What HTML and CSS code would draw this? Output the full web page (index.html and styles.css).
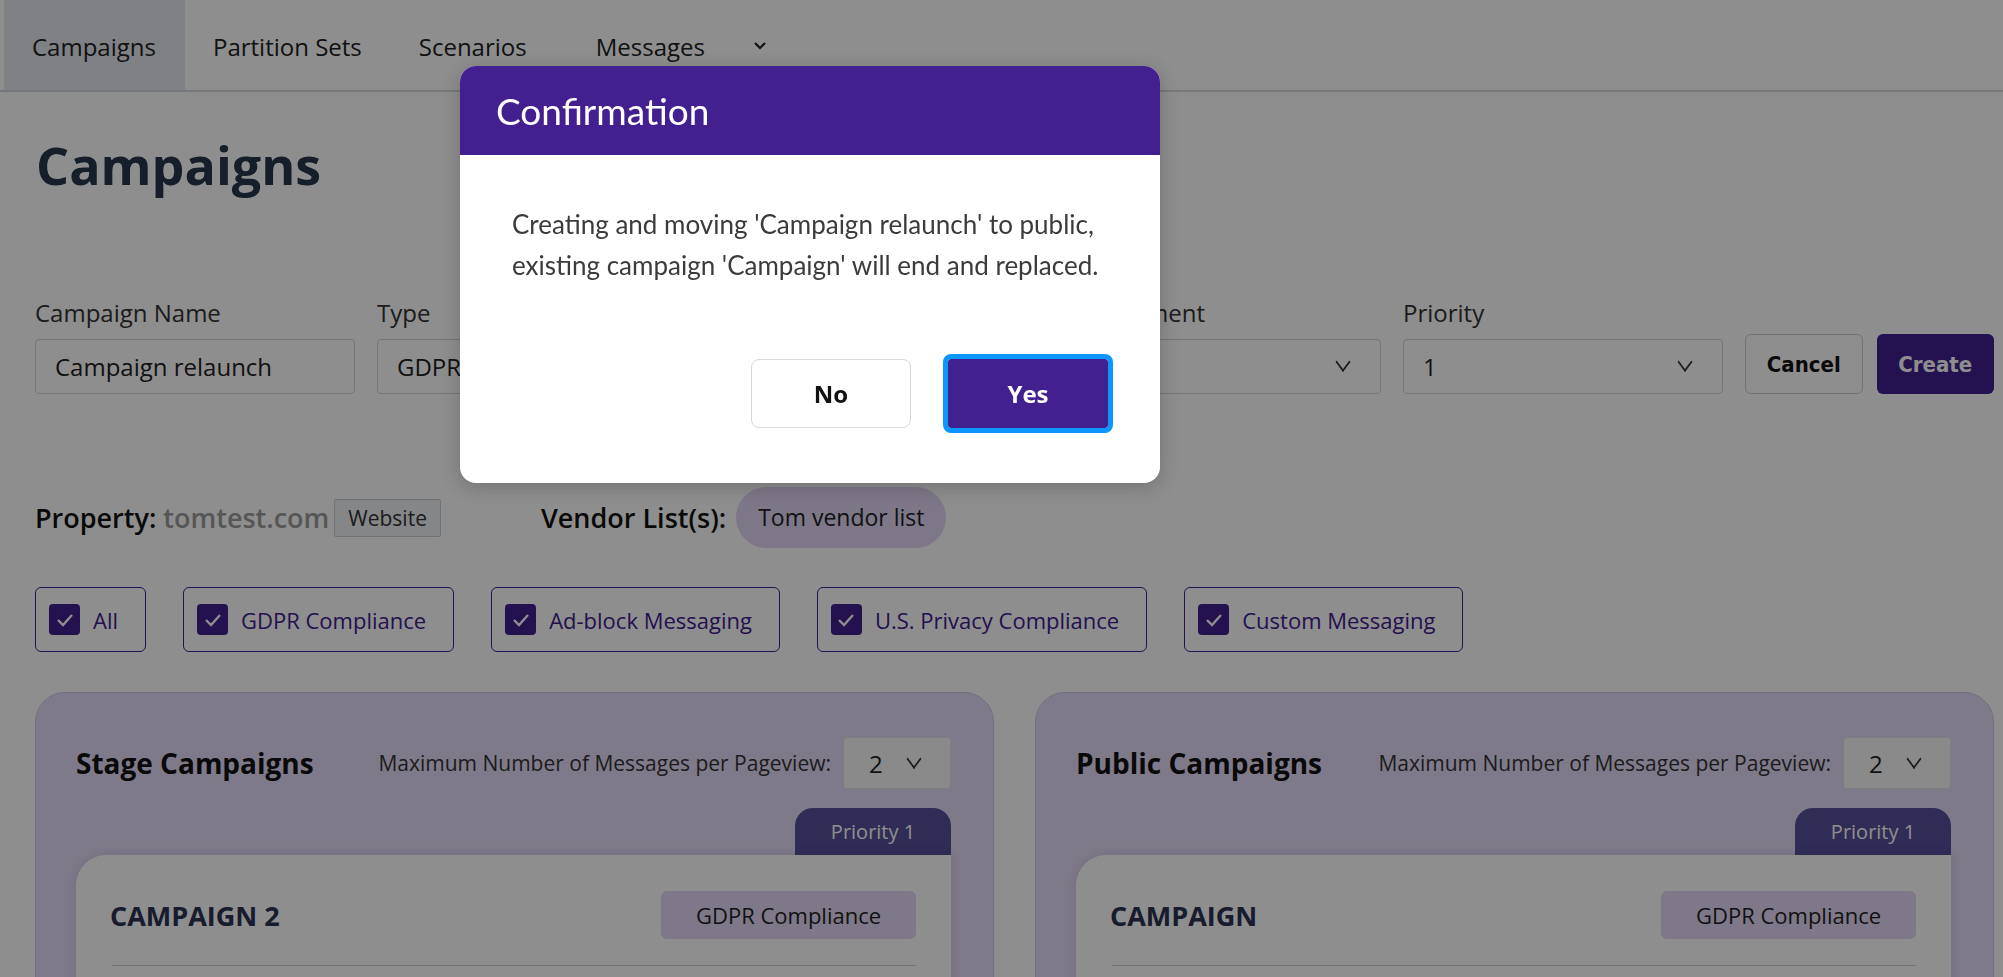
FILE: index.html
```html
<!DOCTYPE html>
<html lang="en">
<head>
    <meta charset="UTF-8">
    <title>Campaigns</title>
    <link rel="stylesheet" href="styles.css">
</head>
<body>

    <nav class="topnav">
        <a class="nav-item active">Campaigns</a>
        <a class="nav-item">Partition Sets</a>
        <a class="nav-item">Scenarios</a>
        <a class="nav-item nav-drop">Messages
            <svg width="18" height="12" viewBox="0 0 18 12"><polyline points="4,3 9,8 14,3" fill="none" stroke="#222" stroke-width="2.2"/></svg>
        </a>
    </nav>

    <main class="page">
        <h1>Campaigns</h1>

        <div class="form-row">
            <div class="field">
                <label>Campaign Name</label>
                <div class="input">Campaign relaunch</div>
            </div>
            <div class="field">
                <label>Type</label>
                <div class="input select">GDPR Compliance <span class="chev"></span></div>
            </div>
            <div class="field">
                <label>Partition Set</label>
                <div class="input select">Default <span class="chev"></span></div>
            </div>
            <div class="field">
                <label>Environment</label>
                <div class="input select">Stage <span class="chev"></span></div>
            </div>
            <div class="field">
                <label>Priority</label>
                <div class="input select">1 <span class="chev"></span></div>
            </div>
            <button class="btn-cancel">Cancel</button>
            <button class="btn-create">Create</button>
        </div>

        <div class="meta-row">
            <span class="meta-label">Property: <span class="meta-value">tomtest.com</span></span>
            <span class="site-tag">Website</span>
            <span class="meta-label vendor">Vendor List(s):</span>
            <span class="vendor-pill">Tom vendor list</span>
        </div>

        <div class="filters">
            <label class="filter"><span class="check"><svg width="18" height="14" viewBox="0 0 18 14"><polyline points="2,7 7,12 16,2" fill="none" stroke="#fff" stroke-width="2.4"/></svg></span>All</label>
            <label class="filter"><span class="check"><svg width="18" height="14" viewBox="0 0 18 14"><polyline points="2,7 7,12 16,2" fill="none" stroke="#fff" stroke-width="2.4"/></svg></span>GDPR Compliance</label>
            <label class="filter"><span class="check"><svg width="18" height="14" viewBox="0 0 18 14"><polyline points="2,7 7,12 16,2" fill="none" stroke="#fff" stroke-width="2.4"/></svg></span>Ad-block Messaging</label>
            <label class="filter"><span class="check"><svg width="18" height="14" viewBox="0 0 18 14"><polyline points="2,7 7,12 16,2" fill="none" stroke="#fff" stroke-width="2.4"/></svg></span>U.S. Privacy Compliance</label>
            <label class="filter"><span class="check"><svg width="18" height="14" viewBox="0 0 18 14"><polyline points="2,7 7,12 16,2" fill="none" stroke="#fff" stroke-width="2.4"/></svg></span>Custom Messaging</label>
        </div>

        <div class="boards">
            <section class="board">
                <div class="board-head">
                    <h2>Stage Campaigns</h2>
                    <div class="max-msg">
                        Maximum Number of Messages per Pageview:
                        <span class="mini-select">2 <span class="chev"></span></span>
                    </div>
                </div>
                <div class="prio-tab">Priority 1</div>
                <div class="campaign-card">
                    <div class="campaign-head">
                        <h3>CAMPAIGN 2</h3>
                        <span class="type-tag">GDPR Compliance</span>
                    </div>
                    <hr>
                </div>
            </section>

            <section class="board">
                <div class="board-head">
                    <h2>Public Campaigns</h2>
                    <div class="max-msg">
                        Maximum Number of Messages per Pageview:
                        <span class="mini-select">2 <span class="chev"></span></span>
                    </div>
                </div>
                <div class="prio-tab">Priority 1</div>
                <div class="campaign-card">
                    <div class="campaign-head">
                        <h3>CAMPAIGN</h3>
                        <span class="type-tag">GDPR Compliance</span>
                    </div>
                    <hr>
                </div>
            </section>
        </div>
    </main>

    <div class="backdrop"></div>

    <div class="modal">
        <div class="modal-head">Confirmation</div>
        <div class="modal-body">
            <p>Creating and moving 'Campaign relaunch' to public,<br>existing campaign 'Campaign' will end and replaced.</p>
            <div class="modal-actions">
                <button class="btn-no">No</button>
                <button class="btn-yes">Yes</button>
            </div>
        </div>
    </div>

</body>
</html>
```

FILE: styles.css
```css
body {
    margin: 0;
    font-family: "Open Sans", sans-serif;
    color: #333;
    background-color: #fff;
    overflow: hidden;
}

.topnav {
    display: flex;
    height: 92px;
    padding-left: 4px;
    border-bottom: 2px solid #d3d7dc;
    box-sizing: border-box;
}

.nav-item {
    display: flex;
    align-items: center;
    padding: 2px 29px 0 28px;
    font-size: 24px;
    color: #222;
}

.nav-item.active {
    background-color: #e4e8ed;
}

.nav-drop {
    margin-left: 12px;
    gap: 46px;
}

.page {
    padding: 0 9px 0 35px;
}

h1 {
    margin: 42px 0 0 1px;
    font-size: 52px;
    line-height: 62px;
    color: #27374a;
}

.form-row {
    display: flex;
    align-items: flex-end;
    gap: 22px;
    margin-top: 101px;
}

.field label {
    display: block;
    font-size: 24px;
    line-height: 32px;
    margin-bottom: 10px;
    color: #333;
}

.input {
    display: flex;
    align-items: center;
    justify-content: space-between;
    width: 320px;
    height: 55px;
    padding: 0 30px 0 19px;
    box-sizing: border-box;
    border: 1px solid #cfd5dc;
    border-radius: 4px;
    font-size: 24px;
    color: #222;
}

.chev {
    width: 12px;
    height: 12px;
    border-right: 2px solid #333;
    border-bottom: 2px solid #333;
    transform: scaleX(0.75) rotate(45deg);
    margin-top: -9px;
}

.btn-cancel,
.btn-create {
    width: 118px;
    height: 60px;
    border-radius: 6px;
    font-family: "DejaVu Sans Condensed", "DejaVu Sans", sans-serif;
    font-stretch: condensed;
    font-weight: bold;
    font-size: 22px;
}

.btn-cancel {
    background-color: #fff;
    border: 1px solid #cfcfcf;
    color: #111;
}

.btn-create {
    margin-left: -8px;
    background-color: #42208f;
    border: none;
    color: #fff;
}

.meta-row {
    display: flex;
    align-items: center;
    height: 61px;
    margin-top: 93px;
}

.meta-label {
    font-size: 27px;
    font-weight: 600;
    color: #111;
}

.meta-value {
    color: #9a9a9a;
}

.site-tag {
    margin-left: 5px;
    padding: 4px 13px;
    background-color: #eef1f5;
    border: 1px solid #c8ced6;
    border-radius: 2px;
    font-size: 21px;
    color: #333;
}

.vendor {
    margin-left: 100px;
}

.vendor-pill {
    margin-left: 10px;
    height: 61px;
    line-height: 61px;
    padding: 0 22px;
    border-radius: 31px;
    background-color: #e2d6f5;
    font-size: 23px;
    color: #222;
}

.filters {
    display: flex;
    gap: 37px;
    margin-top: 39px;
}

.filter {
    display: flex;
    align-items: center;
    gap: 13px;
    height: 65px;
    padding: 0 27px 0 13px;
    box-sizing: border-box;
    border: 1.5px solid #42208f;
    border-radius: 6px;
    font-size: 22px;
    color: #42208f;
}

.check {
    display: flex;
    align-items: center;
    justify-content: center;
    width: 31px;
    height: 31px;
    border-radius: 4px;
    background-color: #42208f;
}

.boards {
    display: flex;
    gap: 41px;
    margin-top: 40px;
}

.board {
    flex: 1;
    height: 400px;
    padding: 44px 42px 0 40px;
    background-color: #e5dbf6;
    border: 1px solid #d2c6e8;
    border-radius: 30px;
}

.board-head {
    display: flex;
    align-items: center;
    justify-content: space-between;
}

.board h2 {
    margin: 0;
    font-size: 28px;
    color: #111;
}

.max-msg {
    display: flex;
    align-items: center;
    gap: 12px;
    font-size: 21px;
    color: #333;
}

.mini-select {
    display: flex;
    align-items: center;
    gap: 24px;
    width: 108px;
    height: 52px;
    padding-left: 25px;
    box-sizing: border-box;
    background-color: #f8f8f8;
    border: 1px solid #e2e2e2;
    border-radius: 4px;
    font-size: 24px;
    color: #222;
}

.prio-tab {
    width: 156px;
    height: 47px;
    margin: 19px 0 0 auto;
    line-height: 47px;
    text-align: center;
    background-color: #55519b;
    border-radius: 18px 18px 0 0;
    font-size: 20px;
    color: #fff;
}

.campaign-card {
    height: 300px;
    padding: 36px 35px 0 36px;
    background-color: #fff;
    border-radius: 30px 0 0 0;
    box-shadow: 0 0 12px rgba(60, 40, 110, 0.15);
}

.campaign-head {
    display: flex;
    align-items: center;
    justify-content: space-between;
}

.campaign-head h3 {
    margin: 0 0 0 -2px;
    font-size: 27px;
    color: #2b3352;
}

.type-tag {
    width: 255px;
    height: 48px;
    line-height: 48px;
    text-align: center;
    background-color: #e3d8f4;
    border-radius: 6px;
    font-size: 22px;
    color: #222;
}

.campaign-card hr {
    margin: 26px 0 0;
    border: none;
    border-top: 1px solid #c9d0d8;
}

.backdrop {
    position: fixed;
    inset: 0;
    background-color: rgba(0, 0, 0, 0.443);
}

.modal {
    position: fixed;
    left: 460px;
    top: 66px;
    width: 700px;
    background-color: #fff;
    border-radius: 16px;
    overflow: hidden;
    box-shadow: 0 4px 20px rgba(0, 0, 0, 0.2);
}

.modal-head {
    height: 89px;
    line-height: 89px;
    padding-left: 36px;
    background-color: #42208f;
    font-family: Lato, sans-serif;
    font-size: 37px;
    color: #fff;
}

.modal-body {
    padding: 49px 52px 55px;
}

.modal-body p {
    margin: 0;
    font-family: Lato, sans-serif;
    font-size: 26px;
    line-height: 41px;
    color: #3b3b3b;
}

.modal-actions {
    display: flex;
    justify-content: flex-end;
    gap: 37px;
    margin-top: 73px;
}

.btn-no,
.btn-yes {
    width: 160px;
    height: 69px;
    font-family: "Open Sans", sans-serif;
    font-weight: bold;
    font-size: 24px;
    border-radius: 8px;
}

.btn-no {
    background-color: #fff;
    border: 1px solid #d8d8d8;
    color: #111;
}

.btn-yes {
    background-color: #42208f;
    border: none;
    border-radius: 3px;
    color: #fff;
    outline: 5px solid #0b97ff;
}
```
